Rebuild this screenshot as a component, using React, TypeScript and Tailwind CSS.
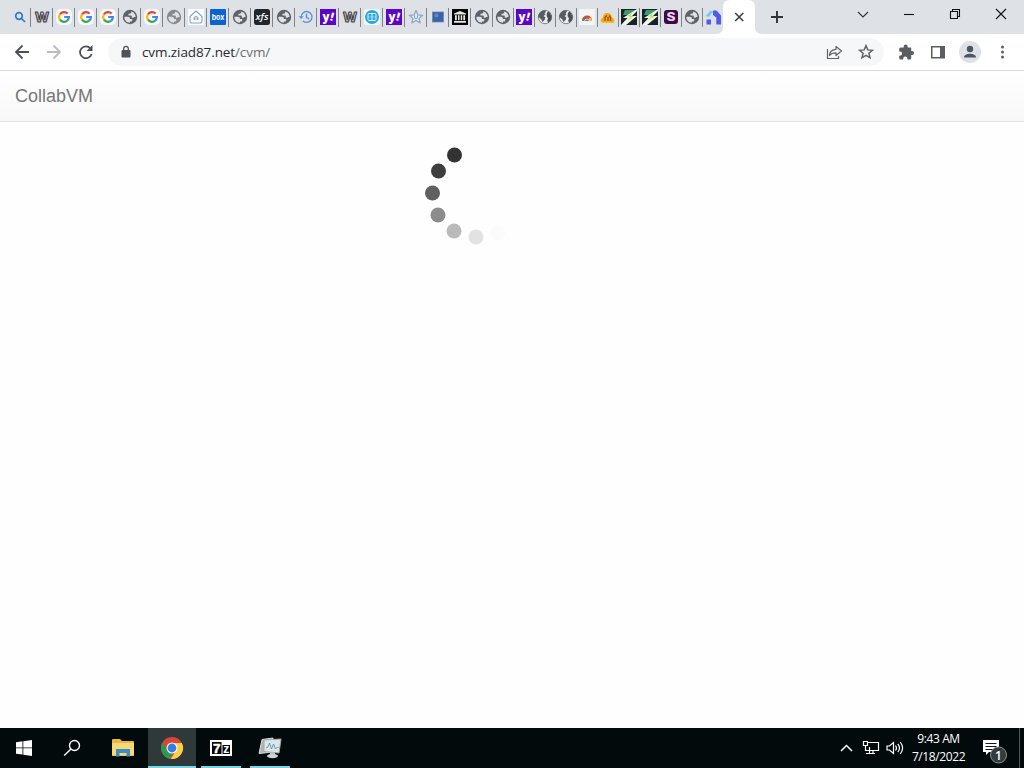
import type { ReactNode } from 'react'

type IconName =
  | 'search' | 'weebly' | 'google' | 'globe' | 'globeLight' | 'home' | 'box' | 'xfs'
  | 'history' | 'yahoo' | 'columns' | 'star' | 'screen' | 'archive' | 'earth'
  | 'rainbow' | 'warning' | 'bolt' | 'slash' | 'arch'

const wideTabs: IconName[] = [
  'search', 'weebly', 'google', 'google', 'google', 'globe', 'google', 'globeLight',
  'home', 'box', 'globe', 'xfs', 'globe', 'history', 'yahoo', 'weebly', 'columns',
  'yahoo', 'star', 'screen', 'archive', 'globe',
]

const narrowTabs: IconName[] = [
  'globe', 'yahoo', 'earth', 'earth', 'rainbow', 'warning', 'bolt', 'bolt', 'slash', 'globe', 'arch',
]

const dots = [
  { x: 454.5, y: 33, fill: '#333333' },
  { x: 438.5, y: 49, fill: '#3e3e3e' },
  { x: 432.5, y: 71, fill: '#606060' },
  { x: 438, y: 93, fill: '#8c8c8c' },
  { x: 454, y: 109, fill: '#bababa' },
  { x: 476, y: 115, fill: '#e2e2e2' },
  { x: 498, y: 111, fill: '#fbfbfb' },
]

function Globe({ color }: { color: string }) {
  return (
    <>
      <circle cx="8" cy="8" r="7.200" fill={color} />
      <path
        d="M2.400 7.800h3.400c1.500 0 2.200.9 2.200 2.200h2.200v1.600c0 .6-.5 1-1.100 1H8v1.200C4.600 13.700 2.100 11.200 2.400 7.800Z"
        fill="#dee1e6"
      />
      <path
        d="M9.200 2.500v.8c0 .9-.6 1.400-1.500 1.400H6.500v1.800h2.300c.6 0 1 .4 1 1v1.200h1.500c.6 0 1-.6 1.500-.6h.8c.1-2.800-1.600-4.900-4.400-5.600Z"
        fill="#dee1e6"
      />
    </>
  )
}

const favicons: Record<IconName, ReactNode> = {
  search: (
    <g fill="none" stroke="#2f7cc4" strokeWidth="1.700">
      <circle cx="7" cy="7" r="3.300" />
      <path d="M9.500 9.500 13 13" />
    </g>
  ),
  weebly: (
    <text x="8" y="12.700" textAnchor="middle" fontSize="13" fontWeight="700" fill="#eef0f2" stroke="#3d4045" strokeWidth="1.100" strokeLinejoin="round" fontFamily="Inter, sans-serif" textLength="14" lengthAdjust="spacingAndGlyphs">
      W
    </text>
  ),
  google: (
    <>
      <rect width="16" height="16" rx="5" fill="#f7f8f9" />
      <g fill="none" strokeWidth="2.200">
        <path d="M4 5.300A4.900 4.900 0 0 1 11.600 4.600" stroke="#ea4335" />
        <path d="M4 5.300A4.900 4.900 0 0 0 4 10.700" stroke="#fbbc05" />
        <path d="M4 10.700A4.900 4.900 0 0 0 11.200 11.700" stroke="#34a853" />
        <path d="M11.200 11.700A4.900 4.900 0 0 0 12.900 8H8.200" stroke="#4285f4" />
      </g>
    </>
  ),
  globe: <Globe color="#5f6368" />,
  globeLight: <Globe color="#86898d" />,
  home: (
    <>
      <rect width="16" height="16" fill="#fbfcfd" />
      <path d="M8 2 14 7.500V12a2 2 0 0 1-2 2H4a2 2 0 0 1-2-2V7.500Z" fill="none" stroke="#7ea7d2" strokeWidth="1.100" strokeLinejoin="round" />
      <path d="M5.500 11V8.500L8 6.500l2.500 2V11Z" fill="#a5a9b4" />
      <path d="M7.500 8h1v3h-1Z" fill="#fff" />
    </>
  ),
  box: (
    <>
      <rect width="16" height="16" rx="1" fill="#0b62d1" />
      <text x="8" y="10.800" textAnchor="middle" fontSize="7.500" fontWeight="700" fill="#fff" fontFamily="Inter, sans-serif" textLength="12.500" lengthAdjust="spacingAndGlyphs">
        box
      </text>
    </>
  ),
  xfs: (
    <>
      <rect width="16" height="16" rx="2.500" fill="#22252a" />
      <text x="8" y="11" textAnchor="middle" fontSize="9" fontWeight="600" fontStyle="italic" fill="#fff" fontFamily="Open Sans, sans-serif" textLength="13" lengthAdjust="spacingAndGlyphs">
        xfs
      </text>
    </>
  ),
  history: (
    <g fill="none" stroke="#5d93e0" strokeWidth="1.400">
      <path d="M3.200 8a5.400 5.400 0 1 1 1.700 3.900" />
      <path d="M8.500 4.800v3.600l2.600 1.500" />
      <path d="M.600 7.200h5.200L3.200 10Z" fill="#5d93e0" stroke="none" />
    </g>
  ),
  yahoo: (
    <>
      <rect width="16" height="16" fill="#5c05c8" />
      <text x="6" y="11.500" textAnchor="middle" fontSize="11.500" fontWeight="800" fill="#fff" fontFamily="Open Sans, sans-serif">
        y
      </text>
      <text x="9.500" y="11.500" fontSize="11.500" fontWeight="800" fill="#fff" fontFamily="Open Sans, sans-serif" transform="rotate(14 10 11)">
        !
      </text>
    </>
  ),
  columns: (
    <>
      <rect width="16" height="16" rx="3" fill="#f3f9fc" />
      <circle cx="8" cy="8" r="7" fill="#2ba7dc" />
      <rect x="4" y="4.500" width="8" height="7" rx="1" fill="none" stroke="#dff3fb" />
      <path d="M8 4.500v7" stroke="#dff3fb" />
      <path d="M4 8h8" stroke="#dff3fb" strokeWidth=".5" />
    </>
  ),
  star: (
    <>
      <path d="m8 1.500 1.900 4.300 4.700.5-3.500 3.100 1 4.600L8 11.600 3.900 14l1-4.600L1.400 6.300l4.700-.5Z" fill="#e6e9ed" stroke="#8fa5bb" strokeWidth="1.200" strokeLinejoin="round" />
      <path d="M6.500 6.500v1.800a1.500 1.500 0 0 0 3 0V6.500" fill="none" stroke="#4fa8d5" />
    </>
  ),
  screen: (
    <>
      <rect x="2.500" y="3" width="11" height="10" fill="#3b61a8" stroke="#6c87b5" strokeWidth=".8" />
      <circle cx="6.500" cy="6.500" r="2" fill="#6088c8" />
    </>
  ),
  archive: (
    <>
      <rect width="16" height="16" fill="#050505" />
      <path d="M2 4.500 8 2l6 2.500v1H2ZM2 12h12v1.800H2ZM3 6.200h1.800v5H3ZM6 6.200h1.500v5H6ZM8.700 6.200h1.500v5H8.700ZM11.300 6.200h1.800v5h-1.800Z" fill="#e6e6e6" />
    </>
  ),
  earth: (
    <>
      <circle cx="8" cy="8" r="6.700" fill="#eceef0" stroke="#83878b" />
      <path d="M1.300 8C1.500 4 4.500 1.400 8 1.300L9 3 7.500 4.200l1 1.300L6.500 7l2 1.500L7.500 11l-2 2L4 10 2 8.500Z" fill="#595d61" />
      <path d="m10 3.500 2-1L14.700 7l-.5 4-3 3-1-2.500L11 9.500 9.500 7Z" fill="#4d5155" />
    </>
  ),
  rainbow: (
    <>
      <rect width="16" height="16" fill="#f3f4f5" />
      <path d="M3 11.500a5 5 0 0 1 10 0Z" fill="#dc4437" />
      <path d="m3 12 .8-3.500L6.500 12Z" fill="#31a765" />
      <path d="m10 9 2.200-.5L13 12h-3Z" fill="#f2bd38" />
      <path d="M5.500 12.500a2.500 2.500 0 0 1 5 0Z" fill="#4588df" stroke="#fff" strokeWidth=".7" />
    </>
  ),
  warning: (
    <>
      <path d="M2.500 13.500a2.300 2.300 0 0 1 0-4.500C3 5.500 5 3.500 8 4c3 .5 3.500 2 4 4.500 3 1 3 5 0 5Z" fill="#f3a712" />
      <path d="M5 12V8.500l2-2M8 12V8M10.500 12V8.500l-1.500-2" stroke="#9b4f1d" strokeWidth="1.300" fill="none" />
      <path d="M2 13.500h12" stroke="#f2c42f" strokeWidth="1.200" />
    </>
  ),
  bolt: (
    <>
      <rect width="16" height="16" fill="#172325" />
      <path d="M4 1h12L9 6H2Z" fill="#3c9970" />
      <path d="m16 0-14 9h4.500L0 16h5l11-9h-5L16 2Z" fill="#f2f6ed" />
      <path d="m11 4-5 3.500h3.500L6 11.500 13 7h-3Z" fill="#c5dc55" />
    </>
  ),
  slash: (
    <>
      <rect x="1" y="1" width="14" height="14" rx="3" fill="#3b0c42" />
      <text x="8" y="12" textAnchor="middle" fontSize="11.500" fontWeight="800" fill="#ead2ee" fontFamily="Inter, sans-serif" textLength="9" lengthAdjust="spacingAndGlyphs">
        S
      </text>
    </>
  ),
  arch: (
    <>
      <path d="M.500 7 5 2h3.500L4 8Z" fill="#75cdf0" />
      <path d="M8 1.500h3.500L16 6.500v9h-4.700V8.500L8 6Z" fill="#505be5" />
      <rect x="1.500" y="10.500" width="4.500" height="5" fill="#4f5ce8" />
    </>
  ),
}

function Favicon({ name }: { name: IconName }) {
  return (
    <svg className="size-4 shrink-0 overflow-visible" viewBox="0 0 16 16">
      {favicons[name]}
    </svg>
  )
}

function TabStrip() {
  return (
    <div className="flex h-[34px] shrink-0 items-end bg-[#dee1e6] pl-[9px]">
      {wideTabs.map((name, i) => (
        <div key={i} className="flex h-[34px] w-[22px] items-center pl-[3px]">
          <Favicon name={name} />
          <div className="ml-[2px] h-[19px] w-px shrink-0 bg-[#808388]" />
        </div>
      ))}
      {narrowTabs.map((name, i) => (
        <div key={i} className="flex h-[34px] w-[21px] items-center pl-[2px]">
          <Favicon name={name} />
          {i < narrowTabs.length - 1 && <div className="ml-[2px] h-[19px] w-px shrink-0 bg-[#808388]" />}
        </div>
      ))}

      {/* Active tab */}
      <div className="-ml-2 flex h-[34px] w-12 shrink-0 items-end">
        <svg width="48" height="34" viewBox="0 0 48 34">
          <path d="M0 34q7 0 7-7V7q0-7 7-7h18q7 0 7 7v20q0 7 7 7Z" fill="#fff" />
          <path d="m19.200 13 8 8m0-8-8 8" stroke="#3c4043" strokeWidth="1.600" />
        </svg>
      </div>
      <svg className="mb-[10px] ml-[6px] size-[14px]" viewBox="0 0 14 14" stroke="#303438" strokeWidth="1.900">
        <path d="M7 1v12M1 7h12" />
      </svg>

      {/* Window buttons */}
      <div className="ml-auto flex h-7 items-center self-start">
        <svg width="184" height="28" viewBox="0 0 184 28" fill="none" stroke="#111" strokeWidth="1.100">
          <path d="m18 12 5 5 5-5" stroke="#333" />
          <path d="M64 14.500h10" />
          <path d="M110.500 11.500h7v7h-7ZM112.500 11.500v-2h7v7h-2" />
          <path d="m156 9 10 10m0-10-10 10" />
        </svg>
      </div>
    </div>
  )
}

function Toolbar() {
  return (
    <div className="flex h-[37px] shrink-0 items-center border-b border-[#d9dadd] bg-white">
      <svg className="shrink-0" width="108" height="36" viewBox="0 0 108 36" fill="none" strokeWidth="1.800">
        <path d="M29 18H16m6.500-6.500L16 18l6.500 6.500" stroke="#4c5054" />
        <path d="M47 18h13m-6.500-6.500L60 18l-6.500 6.500" stroke="#b9bbbe" />
        <path d="M90.500 14.500A5.900 5.900 0 1 0 91.600 20" stroke="#4c5054" />
        <path d="M92.500 11v6h-6Z" fill="#4c5054" />
      </svg>
      <div className="flex h-7 w-[776px] items-center rounded-full bg-[#f6f7f8] pl-3">
        <svg width="12" height="14" viewBox="0 0 12 14">
          <rect x="1.500" y="5" width="9" height="7.500" rx="1" fill="#4f5358" />
          <path d="M3.700 5.500V3.600a2.300 2.300 0 0 1 4.600 0v1.900" fill="none" stroke="#4f5358" strokeWidth="1.300" />
        </svg>
        <span className="ml-[10px] font-['Open_Sans',sans-serif] text-[13.500px] leading-5 tracking-[-0.100px] text-[#292b2e]">
          cvm.ziad87.net<span className="text-[#6a6e73]">/cvm/</span>
        </span>
        <svg className="ml-auto" width="70" height="28" viewBox="0 0 70 28" fill="none" stroke="#5f6368" strokeWidth="1.200">
          <path d="M13.500 11v9.500h11V18" />
          <path d="M15.500 17.500c.4-4 2.500-6 6.500-6.200V8.500l5.500 4.500-5.500 4.500v-2.700c-3-.1-5 .8-6.500 2.700Z" strokeLinejoin="round" />
          <path d="m52 7.700 1.800 4.200 4.600.4-3.500 3 1.100 4.500-4-2.400-4 2.400 1.100-4.500-3.500-3 4.600-.4Z" strokeWidth="1.500" />
        </svg>
      </div>
      <svg width="140" height="36" viewBox="0 0 140 36" fill="#5a5e63">
        <path transform="translate(-.8 0)" d="M27.500 13.500h-3v-1a2 2 0 0 0-4 0v1h-3a1.500 1.500 0 0 0-1.500 1.500v2.500h.8a2.100 2.100 0 0 1 0 4.200H16V24a1.500 1.500 0 0 0 1.500 1.500H20v-.8a2.100 2.100 0 0 1 4.200 0v.8h2.300A1.500 1.500 0 0 0 28 24v-3h.8a2 2 0 0 0 0-4H28v-2a1.500 1.500 0 0 0-.5-1.500Z" />
        <path d="M47 12h14v12.500H47ZM48.500 13.500V23H56v-9.500Z" fillRule="evenodd" />
        <circle cx="86" cy="18" r="11" fill="#dee2e6" />
        <circle cx="86" cy="15" r="3.200" fill="#4b5660" />
        <path d="M80 23.500c0-5 12-5 12 0Z" fill="#4b5660" />
        <circle cx="118.500" cy="13" r="1.500" />
        <circle cx="118.500" cy="18" r="1.500" />
        <circle cx="118.500" cy="23" r="1.500" />
      </svg>
    </div>
  )
}

function Page() {
  return (
    <div className="flex min-h-0 flex-1 flex-col bg-[#fefefe]">
      <nav className="flex h-[51px] shrink-0 items-center border-b border-[#e2e2e2] bg-linear-to-b from-white to-[#f8f8f8] pl-[15px]">
        <span className="font-['Liberation_Sans',sans-serif] text-lg leading-5 text-[#777]">CollabVM</span>
      </nav>
      <svg width="1024" height="140" viewBox="0 0 1024 140">
        {dots.map((dot) => (
          <circle key={dot.fill} cx={dot.x} cy={dot.y} r="7.500" fill={dot.fill} />
        ))}
      </svg>
    </div>
  )
}

function Taskbar() {
  return (
    <div className="flex h-10 shrink-0 bg-[#020a0b] font-['Open_Sans',sans-serif] text-white">
      <div className="flex w-12 items-center justify-center">
        <svg width="16" height="16" viewBox="0 0 16 16" fill="#fff">
          <path d="M0 2.300 6.500 1.300v6.200H0ZM7.300 1.200 16 0v7.500H7.300ZM0 8.300h6.500v6.300L0 13.700ZM7.300 8.300H16V16l-8.700-1.300Z" />
        </svg>
      </div>
      <div className="flex w-12 items-center justify-center">
        <svg width="18" height="18" viewBox="0 0 18 18" fill="none" stroke="#fff" strokeWidth="1.400">
          <circle cx="11.500" cy="6.500" r="5" />
          <path d="M8 10 1.200 16.500" />
        </svg>
      </div>
      <div className="flex w-[52px] items-center justify-center pl-[2px]">
        <svg width="22" height="18" viewBox="0 0 22 18">
          <path d="M0 1q0-1 1-1h7l2 2h11q1 0 1 1v13q0 1-1 1H1q-1 0-1-1Z" fill="#e9b743" />
          <path d="M0 4h22v12.500H0Z" fill="#f8d775" />
          <path d="M4 10h14v7.500h-3.500V14h-7v3.500H4Z" fill="#3e8cc7" />
        </svg>
      </div>
      <div className="flex w-12 items-center justify-center border-b-2 border-[#79d3e2] bg-[#303939] pt-[2px]">
        <svg width="24" height="24" viewBox="0 0 24 24">
          <circle cx="12" cy="12" r="11" fill="#db4437" />
          <path d="M2.500 6.500 7.500 15 12 17l-1.500 5.900A11 11 0 0 1 2.500 6.500Z" fill="#279b55" />
          <path d="M12 7h9.800A11 11 0 0 1 10.700 23L16.300 14.500Z" fill="#fdd043" />
          <circle cx="12" cy="12" r="5.500" fill="#f8f8f8" />
          <circle cx="12" cy="12" r="4.400" fill="#357de1" />
        </svg>
      </div>
      <div className="ml-[5px] flex w-10 items-center justify-center border-b-2 border-[#79d3e2] pt-[2px]">
        <svg width="22" height="16" viewBox="0 0 22 16">
          <rect width="22" height="16" fill="#fff" />
          <rect x="2" y="2" width="9.500" height="12" fill="#050505" />
          <rect x="12.500" y="5" width="7.500" height="9" fill="#050505" />
          <text x="6.700" y="13" textAnchor="middle" fontSize="13.500" fontWeight="700" fill="#fff" stroke="#fff" strokeWidth=".5" fontFamily="Liberation Sans, sans-serif">7</text>
          <text x="16.200" y="13" textAnchor="middle" fontSize="12" fontWeight="700" fill="#fff" fontFamily="Liberation Sans, sans-serif">z</text>
        </svg>
      </div>
      <div className="ml-[9px] flex w-10 items-center justify-center border-b-2 border-[#79d3e2] pt-[2px]">
        <svg width="24" height="22" viewBox="0 0 24 22">
          <path d="M4 2.500 15 1v14L1 16.500Z" fill="#aeb4b6" stroke="#d9dddd" />
          <path d="m6 3 17-1-2 14-15-1.500Z" fill="#dce5e8" stroke="#a4abae" />
          <path d="m8 11 2-1 1.500-4 2 6 2-5 2 5 2-2 1 1" fill="none" stroke="#5a97b3" strokeWidth=".9" />
          <path d="M12 15h5v4h-5Z" fill="#b5bbbd" />
          <ellipse cx="14.500" cy="19" rx="5.500" ry="2.200" fill="#cfd4d5" />
        </svg>
      </div>

      {/* Tray */}
      <svg className="ml-auto" width="70" height="40" viewBox="0 0 70 40" fill="none" stroke="#fff" strokeWidth="1.200">
        <path d="m5 23 5.500-5.500L16 23" strokeWidth="1.500" />
        <path d="M31.500 14.500h11v8h-12M33.500 19v6.500M30 25.500h9M37 22.500v3" />
        <path d="M27.500 13.500h4v4h-4ZM29.500 17.500v5h2" />
        <path d="M51 18h2.500l4-3.500v11l-4-3.500H51ZM59.500 17.500q2 2.500 0 5M61.800 15.800q3.400 4.200 0 8.400M64.200 14q4.800 6 0 12" />
      </svg>
      <div className="flex w-[66px] flex-col items-center justify-center pr-px text-[12px] leading-[18px] tracking-[-0.400px] whitespace-nowrap">
        <span>9:43 AM</span>
        <span>7/18/2022</span>
      </div>
      <svg width="47" height="40" viewBox="0 0 47 40">
        <path d="M11 12h16v12H17l-3 3v-3h-3Z" fill="#fff" />
        <path d="M13.500 15.500h11M13.500 18.500h11M13.500 21.500h8" stroke="#101718" />
        <circle cx="26.500" cy="27" r="8" fill="#343b3c" stroke="#889092" />
        <text x="26.500" y="31.500" textAnchor="middle" fontSize="12" fontWeight="600" fill="#fff" fontFamily="Open Sans, sans-serif">1</text>
      </svg>
      <div className="w-[5px] border-l border-[#4d5556]" />
    </div>
  )
}

export default function App() {
  return (
    <div className="flex h-screen w-[1024px] flex-col overflow-hidden bg-white">
      <TabStrip />
      <Toolbar />
      <Page />
      <Taskbar />
    </div>
  )
}
